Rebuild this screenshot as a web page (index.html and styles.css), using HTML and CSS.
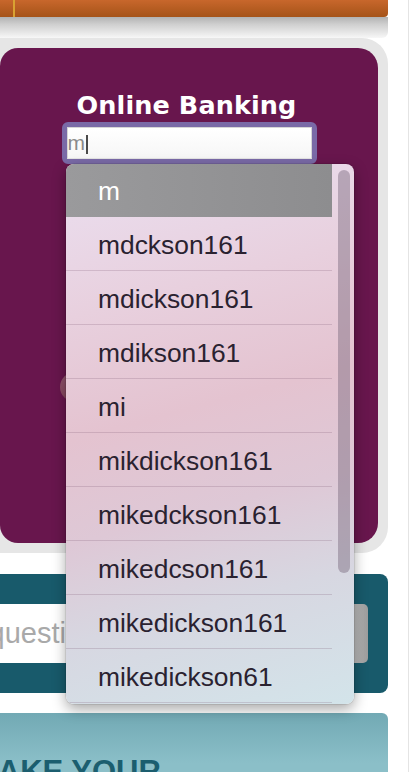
FILE: index.html
```html
<!DOCTYPE html>
<html lang="en">
<head>
<meta charset="utf-8">
<title>Online Banking</title>
<link rel="stylesheet" href="styles.css">
</head>
<body>
<div class="page">
  <header class="topbar"><span class="nav-sep"></span></header>
  <div class="topshadow"></div>

  <section class="login-frame">
    <div class="login">
      <h2 class="login-title">Online Banking</h2>
      <div class="userfield">
        <div class="userfield-inner">m<span class="caret"></span></div>
      </div>
      <div class="login-btn"></div>
    </div>
  </section>

  <section class="search">
    <div class="search-field">Ask a question</div>
    <div class="search-btn"></div>
  </section>

  <section class="promo">
    <h2 class="promo-title">MAKE YOUR</h2>
  </section>

  <div class="suggest">
    <ul class="suggest-list">
      <li class="active">m</li>
      <li>mdckson161</li>
      <li>mdickson161</li>
      <li>mdikson161</li>
      <li>mi</li>
      <li>mikdickson161</li>
      <li>mikedckson161</li>
      <li>mikedcson161</li>
      <li>mikedickson161</li>
      <li>mikedickson61</li>
    </ul>
    <div class="thumb"></div>
  </div>
</div>
</body>
</html>
```

FILE: styles.css
```css
* {
  box-sizing: border-box;
  margin: 0;
  padding: 0;
}

html, body {
  overflow: hidden;
  background: #fff;
}

body {
  font-family: "Liberation Sans", Arial, sans-serif;
}

.page {
  position: relative;
  width: 409px;
  height: 772px;
  border-right: 1px solid #e4e4e4;
  overflow: hidden;
}

.topbar {
  display: flex;
  height: 17px;
  margin-right: 20px;
  background: linear-gradient(#c8672c, #a55318);
  border-bottom-right-radius: 4px;
}

.nav-sep {
  width: 15px;
  border-right: 2px solid #d9a232;
}

.topshadow {
  height: 21px;
  margin-right: 20px;
  background: linear-gradient(#b2b2b2, #cfcfcf 35%, #f7f7f7);
  border-bottom-right-radius: 6px;
}

.login-frame {
  margin-right: 20px;
  padding: 10px 10px 10px 0;
  background: #e6e6e6;
  border-radius: 0 26px 26px 0;
}

.login {
  display: flex;
  flex-direction: column;
  align-items: center;
  height: 495px;
  padding-top: 42px;
  background: #68164d;
  border-radius: 18px 20px 20px 18px;
}

.login-title {
  font-family: "DejaVu Sans", Verdana, sans-serif;
  font-weight: bold;
  font-size: 25.5px;
  line-height: 30px;
  color: #fff;
  margin-right: 5px;
  letter-spacing: 0.1px;
}

.userfield {
  width: 255px;
  height: 42px;
  margin-top: 2px;
  border: 5px solid #7a6aa7;
  border-radius: 6px;
  background: #7a6aa7;
}

.userfield-inner {
  height: 32px;
  border: 1px solid #d6d6d6;
  border-bottom-color: #e4e4e4;
  background: linear-gradient(#fff, #f6f6f6);
  font-size: 21px;
  line-height: 30px;
  color: #8a8a8a;
}

.caret {
  display: inline-block;
  width: 2px;
  height: 19px;
  margin-left: 1px;
  vertical-align: -4px;
  background: #4a4a4a;
}

.login-btn {
  width: 258px;
  height: 30px;
  margin-top: 208px;
  border-radius: 15px;
  background: linear-gradient(#b58a8c, #9a6a66);
  opacity: 0.55;
}

.search {
  display: flex;
  height: 119px;
  margin-top: 21px;
  margin-right: 20px;
  padding: 30px 20px 30px 0;
  background: #185a6b;
  border-radius: 0 8px 8px 0;
}

.search-field {
  flex: 1;
  height: 59px;
  margin-left: -102px;
  padding-left: 10px;
  background: #fff;
  font-size: 29px;
  line-height: 59px;
  color: #a9a9a9;
  white-space: nowrap;
}

.search-btn {
  width: 60px;
  height: 59px;
  background: linear-gradient(90deg, #ededed, #d2d2d2 60%, #9c9c9c);
  border-radius: 0 5px 5px 0;
}

.promo {
  height: 59px;
  margin-top: 20px;
  margin-right: 20px;
  padding-top: 40px;
  overflow: hidden;
  background: linear-gradient(#72a9b4, #8bbfc8 50px);
  border-top-right-radius: 6px;
}

.promo-title {
  margin-left: -28px;
  font-size: 31px;
  font-weight: bold;
  line-height: 37px;
  color: #1b5e6f;
  white-space: nowrap;
}

.suggest {
  position: absolute;
  left: 66px;
  top: 164px;
  width: 288px;
  height: 540px;
  padding-right: 22px;
  overflow: hidden;
  border-radius: 8px;
  background: linear-gradient(165deg, #ebe0f1 0%, #e8d0de 25%, #e4c3d0 45%, #dec8d6 62%, #d7d7e1 78%, #d3e4ea 100%);
  box-shadow: 0 5px 14px rgba(0, 0, 0, 0.35), 0 0 0 1px rgba(0, 0, 0, 0.08);
}

.suggest-list {
  list-style: none;
}

.suggest-list li {
  height: 54px;
  padding: 3px 0 0 32px;
  border-bottom: 1px solid rgba(120, 80, 110, 0.22);
  font-size: 26.4px;
  line-height: 50px;
  color: #2a2230;
  white-space: nowrap;
}

.suggest-list li.active {
  height: 53px;
  padding-top: 2px;
  border-bottom: none;
  background: linear-gradient(90deg, #9a9a9c, #8d8d8f);
  color: #fff;
}

.thumb {
  position: absolute;
  right: 4px;
  top: 6px;
  width: 12px;
  height: 403px;
  border-radius: 6px;
  background: rgba(120, 105, 125, 0.45);
}
```
